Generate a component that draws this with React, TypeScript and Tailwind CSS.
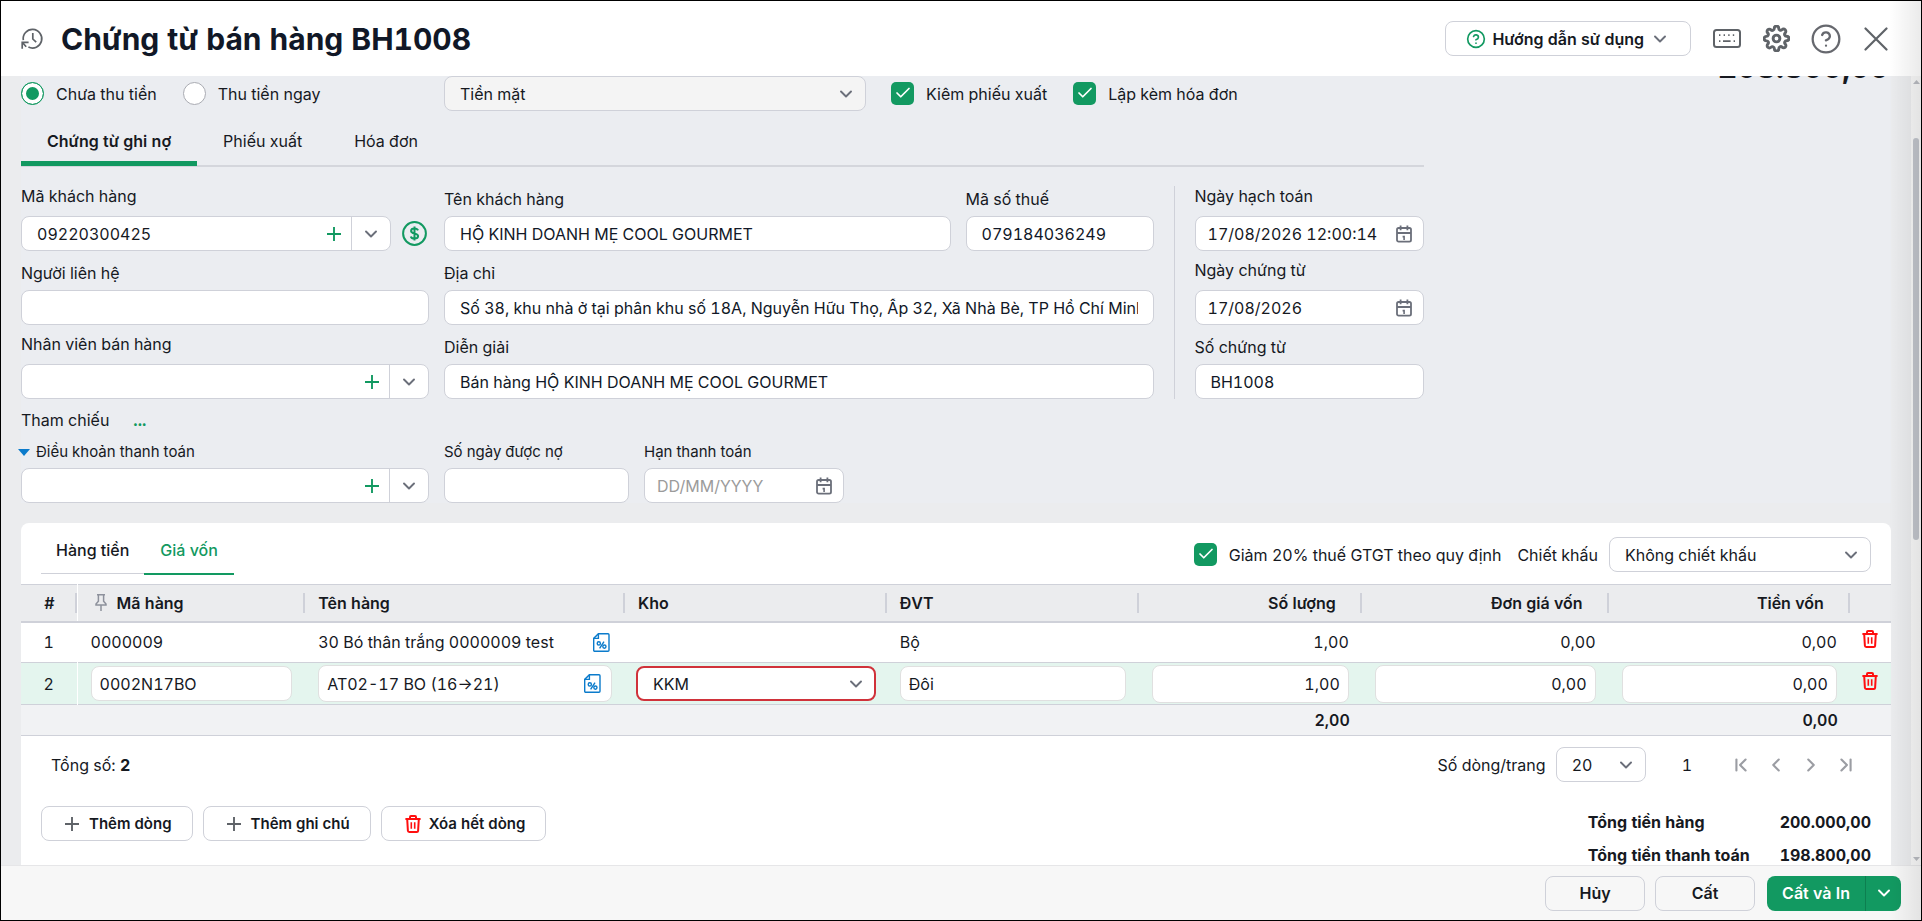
import React from 'react';
import {
  Check,
  ChevronDown,
  ChevronFirst,
  ChevronLast,
  ChevronLeft,
  ChevronRight,
  CircleQuestionMark,
} from 'lucide-react';
import { FiSettings } from 'react-icons/fi';
import clsx from 'clsx';

const FIELD = 'h-[35px] w-full rounded-lg border border-[#cfd1d9] bg-white px-[15px] text-[#111827] outline-none';

const HistoryIcon = () => (
  <svg width="23" height="23" viewBox="0 0 23 23" fill="none" stroke="#5f6368" strokeWidth="1.7">
    <path d="M2.3 13.2A9.3 9.3 0 1 1 7.4 20.1" />
    <path d="M11.8 6v6l3.4 3.2" />
    <path d="M1.2 21.8v-6.4h6.4M1.6 15.8l3.6 4" />
  </svg>
);

const KeyboardIcon = () => (
  <svg width="28" height="20" viewBox="0 0 28 20" fill="none" stroke="#5f6368" strokeWidth="2">
    <rect x="1" y="1" width="26" height="17" rx="2.5" />
    <path d="M6 6.2h1.4M10.6 6.2H12M15.2 6.2h1.4M19.8 6.2h1.4M6 12.2h1.4M10 12.2h7.6M20.6 12.2H22" strokeWidth="1.8" />
  </svg>
);

const CloseIcon = () => (
  <svg width="24" height="24" viewBox="0 0 24 24" fill="none" stroke="#5f6368" strokeWidth="2.2" strokeLinecap="round">
    <path d="M1.5 1.5l21 21M22.5 1.5l-21 21" />
  </svg>
);

const CalendarIcon = () => (
  <svg width="16" height="18" viewBox="0 0 16 18" fill="none" stroke="#6b6f7a" strokeWidth="1.8">
    <rect x="1" y="3" width="14" height="13.6" rx="1.6" />
    <path d="M1 8h14M4.6 .6v4.6M11.4 .6v4.6" />
    <path d="M6.6 11.6h1.5v3.4" strokeWidth="1.6" />
  </svg>
);

const PlusIcon = ({ color }: { color: string }) => (
  <svg width="14" height="14" viewBox="0 0 14 14" fill="none" stroke={color} strokeWidth="1.9">
    <path d="M7 0v14M0 7h14" />
  </svg>
);

const TrashIcon = ({ className }: { className?: string }) => (
  <svg className={className} width="16" height="18" viewBox="0 0 16 18" fill="none" stroke="#ff0f0f" strokeWidth="2">
    <path d="M.4 4h15.2" />
    <path d="M5 4V2a1 1 0 0 1 1-1h4a1 1 0 0 1 1 1v2" />
    <path d="M2.2 4l.7 11.8a1.3 1.3 0 0 0 1.3 1.2h7.6a1.3 1.3 0 0 0 1.3-1.2L13.8 4" />
    <path d="M6.3 7.2v6.6M9.7 7.2v6.6" strokeWidth="1.6" />
  </svg>
);

const TaxFileIcon = () => (
  <svg width="17" height="19" viewBox="0 0 17 19" fill="none" stroke="#0b7bcb" strokeWidth="1.4">
    <path d="M5.4 .7H15a1 1 0 0 1 1 1v15.6a1 1 0 0 1-1 1H1.7a1 1 0 0 1-1-1V5.4z" />
    <path d="M5.4 .7v4.7H.7" />
    <circle cx="5.8" cy="10.4" r="1.6" />
    <circle cx="11.4" cy="13.6" r="1.6" />
    <path d="M11 8.6l-4.4 6.8" />
  </svg>
);

const PinIcon = () => (
  <svg width="12" height="17" viewBox="0 0 12 17" fill="none" stroke="#8d919c" strokeWidth="1.5">
    <path d="M2 .8h8M3.4 .8v6.4L1 10v.9h10V10L8.6 7.2V.8M6 11v6" />
  </svg>
);

const MoneyIcon = () => (
  <svg width="25" height="25" viewBox="0 0 25 25" fill="none" stroke="#129961" strokeWidth="2">
    <circle cx="12.5" cy="12.5" r="11.4" />
    <path d="M16 9.4c-.5-1.3-1.8-1.9-3.5-1.9-2 0-3.4 .9-3.4 2.4 0 3.4 7 1.7 7 5.2 0 1.6-1.5 2.5-3.6 2.5-1.9 0-3.3-.7-3.7-2.2M12.5 5.4v14.2" />
  </svg>
);

const Chevron = () => <ChevronDown size={20} strokeWidth={2.3} className="text-[#6b6f7a]" />;

interface LabelProps {
  htmlFor: string;
  high?: boolean;
  children: React.ReactNode;
}

const FieldLabel: React.FC<LabelProps> = ({ htmlFor, high, children }) => (
  <label htmlFor={htmlFor} className={clsx('flex h-8 leading-6', high ? 'items-start' : 'items-end pb-[5px]')}>
    {children}
  </label>
);

const Combo = ({ id, value = '' }: { id: string; value?: string }) => (
  <div className="flex h-[35px] min-w-0 flex-1 items-stretch overflow-hidden rounded-lg border border-[#cfd1d9] bg-white">
    <input id={id} defaultValue={value} className="min-w-0 flex-1 px-[15px] outline-none" />
    <button aria-label="Thêm" className="flex w-[34px] items-center justify-center">
      <PlusIcon color="#129961" />
    </button>
    <button aria-label="Mở danh sách" className="flex w-[39px] items-center justify-center border-l border-[#cfd1d9]">
      <Chevron />
    </button>
  </div>
);

const Dropdown = ({ id, value, label, className }: { id: string; value: string; label?: string; className?: string }) => (
  <div className="relative w-full">
    <select
      id={id}
      aria-label={label}
      className={clsx('h-[35px] w-full appearance-none rounded-lg border pl-[15px] pr-9 outline-none', className)}
    >
      <option>{value}</option>
    </select>
    <span className="pointer-events-none absolute inset-y-0 right-[10px] flex items-center">
      <Chevron />
    </span>
  </div>
);

const DateField = ({ id, value, placeholder }: { id: string; value?: string; placeholder?: string }) => (
  <div className="flex h-[35px] items-center rounded-lg border border-[#cfd1d9] bg-white pl-3 pr-[11px]">
    <input
      id={id}
      defaultValue={value}
      placeholder={placeholder}
      className="min-w-0 flex-1 outline-none placeholder:text-[#9b9b9b]"
    />
    <button aria-label="Chọn ngày">
      <CalendarIcon />
    </button>
  </div>
);

const CheckField = ({ label }: { label: string }) => (
  <label className="flex items-center gap-3">
    <span className="relative flex size-[23px]">
      <input type="checkbox" defaultChecked className="size-[23px] appearance-none rounded-[5px] bg-[#129961]" />
      <Check size={18} strokeWidth={2.3} className="pointer-events-none absolute left-[3px] top-[2px] text-white" />
    </span>
    {label}
  </label>
);

const RadioField = ({ label, checked }: { label: string; checked?: boolean }) => (
  <label className="flex items-center gap-3">
    <input
      type="radio"
      name="payment"
      defaultChecked={checked}
      className="size-[23px] appearance-none rounded-full border border-[#a9abb2] bg-white checked:border-[#129961] checked:bg-[#129961] checked:shadow-[inset_0_0_0_4px_white]"
    />
    {label}
  </label>
);

const COLUMNS = [
  { label: '#', width: 'w-[3%]', right: false },
  { label: 'Mã hàng', width: 'w-[12.2%]', right: false },
  { label: 'Tên hàng', width: 'w-[17.1%]', right: false },
  { label: 'Kho', width: 'w-[14%]', right: false },
  { label: 'ĐVT', width: 'w-[13.5%]', right: false },
  { label: 'Số lượng', width: 'w-[11.9%]', right: true },
  { label: 'Đơn giá vốn', width: 'w-[13.2%]', right: true },
  { label: 'Tiền vốn', width: 'w-[12.9%]', right: true },
  { label: '', width: 'w-[2.2%]', right: false },
];

const CELL_INPUT = 'w-full rounded-lg border border-[#e0e0e0] bg-white px-2 outline-none';

const Header = () => (
  <header className="flex h-[75px] shrink-0 items-center justify-between bg-white pl-5 pr-[33px]">
    <div className="flex items-center gap-[17px]">
      <HistoryIcon />
      <h1 className="text-[30px] font-bold leading-10 text-[#111827]">Chứng từ bán hàng BH1008</h1>
    </div>
    <div className="flex items-center gap-[22px]">
      <button className="flex h-[35px] items-center rounded-lg border border-[#cfd1d9] px-5 font-semibold">
        <CircleQuestionMark size={20} className="mr-[6px] text-[#129961]" />
        Hướng dẫn sử dụng
        <span className="ml-[6px]">
          <Chevron />
        </span>
      </button>
      <button aria-label="Phím tắt">
        <KeyboardIcon />
      </button>
      <button aria-label="Thiết lập">
        <FiSettings size={27} color="#5f6368" strokeWidth={2.6} />
      </button>
      <button aria-label="Trợ giúp" className="-ml-[2px]">
        <CircleQuestionMark size={32} strokeWidth={1.7} className="text-[#66686e]" />
      </button>
      <button aria-label="Đóng">
        <CloseIcon />
      </button>
    </div>
  </header>
);

const VoucherForm = () => (
  <form className="flex justify-between bg-[#ebedf1]">
    <div className="w-3/4 pt-9">
      <div className="flex items-center">
        <div className="flex w-[408px] items-center gap-[26px]">
          <RadioField label="Chưa thu tiền" checked />
          <RadioField label="Thu tiền ngay" />
        </div>
        <div className="ml-[15px] w-[422px]">
          <Dropdown id="method" label="Phương thức" value="Tiền mặt" className="border-[#cfd1d9] bg-[#f4f4f4]" />
        </div>
        <div className="ml-[25px] flex gap-[26px]">
          <CheckField label="Kiêm phiếu xuất" />
          <CheckField label="Lập kèm hóa đơn" />
        </div>
      </div>

      <div className="mt-[10px] flex border-b-2 border-[#d4d6dc]">
        <button type="button" className="-mb-px h-[45px] border-b-[5px] border-[#129961] px-[26px] font-semibold">
          Chứng từ ghi nợ
        </button>
        <button type="button" className="h-10 px-[26px]">Phiếu xuất</button>
        <button type="button" className="h-10 px-[26px]">Hóa đơn</button>
      </div>

      <div className="flex pt-[17px]">
        <div className="flex w-[408px] shrink-0 flex-col gap-[7px]">
          <div>
            <FieldLabel htmlFor="customer" high>Mã khách hàng</FieldLabel>
            <div className="flex items-center gap-[11px] pr-[2px]">
              <Combo id="customer" value="09220300425" />
              <MoneyIcon />
            </div>
          </div>
          <div>
            <FieldLabel htmlFor="contact">Người liên hệ</FieldLabel>
            <input id="contact" className={FIELD} />
          </div>
          <div>
            <FieldLabel htmlFor="seller" high>Nhân viên bán hàng</FieldLabel>
            <div className="flex">
              <Combo id="seller" />
            </div>
          </div>
        </div>

        <div className="ml-[15px] flex flex-1 flex-col gap-[7px]">
          <div className="flex gap-[15px]">
            <div className="flex-1">
              <FieldLabel htmlFor="name">Tên khách hàng</FieldLabel>
              <input id="name" className={FIELD} defaultValue="HỘ KINH DOANH MẸ COOL GOURMET" />
            </div>
            <div className="w-[188px]">
              <FieldLabel htmlFor="tax">Mã số thuế</FieldLabel>
              <input id="tax" className={FIELD} defaultValue="079184036249" />
            </div>
          </div>
          <div>
            <FieldLabel htmlFor="address">Địa chỉ</FieldLabel>
            <input
              id="address"
              className={FIELD}
              defaultValue="Số 38, khu nhà ở tại phân khu số 18A, Nguyễn Hữu Thọ, Ấp 32, Xã Nhà Bè, TP Hồ Chí Minh"
            />
          </div>
          <div>
            <FieldLabel htmlFor="memo">Diễn giải</FieldLabel>
            <input id="memo" className={FIELD} defaultValue="Bán hàng HỘ KINH DOANH MẸ COOL GOURMET" />
          </div>
        </div>

        <div className="mx-5 mt-[2px] w-px bg-[#cfd1d9]" />

        <div className="flex w-[229px] flex-col gap-[7px]">
          <div>
            <FieldLabel htmlFor="posted" high>Ngày hạch toán</FieldLabel>
            <DateField id="posted" value="17/08/2026 12:00:14" />
          </div>
          <div>
            <FieldLabel htmlFor="issued" high>Ngày chứng từ</FieldLabel>
            <DateField id="issued" value="17/08/2026" />
          </div>
          <div>
            <FieldLabel htmlFor="number">Số chứng từ</FieldLabel>
            <input id="number" className={FIELD} defaultValue="BH1008" />
          </div>
        </div>
      </div>

      <div className="mt-[9px] flex items-center gap-6 leading-6">
        <span>Tham chiếu</span>
        <a href="#reference" className="font-bold text-[#129961]">...</a>
      </div>

      <div className="mt-2 flex">
        <div className="w-[408px]">
          <label htmlFor="terms" className="mb-1 flex items-center gap-[6px] text-[15px] leading-6">
            <svg width="12" height="7" viewBox="0 0 12 7" className="-ml-[3px]">
              <path d="M0 0h12L6 7z" fill="#0b7bcb" />
            </svg>
            Điều khoản thanh toán
          </label>
          <div className="flex">
            <Combo id="terms" />
          </div>
        </div>
        <div className="ml-[15px] w-[185px]">
          <label htmlFor="days" className="mb-1 block text-[15px] leading-6">Số ngày được nợ</label>
          <input id="days" className={FIELD} />
        </div>
        <div className="ml-[15px] w-[200px]">
          <label htmlFor="due" className="mb-1 block text-[15px] leading-6">Hạn thanh toán</label>
          <DateField id="due" placeholder="DD/MM/YYYY" />
        </div>
      </div>
    </div>
    <div className="pr-[2px] text-[30px] font-bold leading-[54px]">208.800,00</div>
  </form>
);

const ItemTable = () => (
  <table className="w-full table-fixed border-collapse">
    <thead>
      <tr className="h-[37px] border-t border-b-2 border-t-[#cfd1d9] border-b-[#cfd1d9] bg-[#ebecee]">
        {COLUMNS.map((c, i) => (
          <th key={i} className={clsx('p-0 font-semibold', c.width, i === 0 && 'border-r border-white')}>
            <div
              className={clsx(
                'flex h-5 items-center gap-[10px] leading-5',
                i === 0 ? 'justify-center pl-[3px]' : 'pl-[13px]',
                c.right && 'justify-end pr-6',
                i < 8 && 'border-r-2 border-[#cfd1d9]'
              )}
            >
              {i === 1 && <span className="ml-1"><PinIcon /></span>}
              {c.label}
            </div>
          </th>
        ))}
      </tr>
    </thead>
    <tbody>
      <tr className="h-[41px] border-b border-[#cfd1d9]">
        <td className="border-r border-white text-center">1</td>
        <td className="px-[13px]">0000009</td>
        <td className="px-[13px]">
          <div className="flex items-center justify-between pr-[2px]">
            30 Bó thân trắng 0000009 test
            <TaxFileIcon />
          </div>
        </td>
        <td />
        <td className="px-[13px]">Bộ</td>
        <td className="px-[13px] text-right">1,00</td>
        <td className="px-[13px] text-right">0,00</td>
        <td className="px-[13px] text-right">0,00</td>
        <td className="text-center">
          <button aria-label="Xóa dòng 1"><TrashIcon /></button>
        </td>
      </tr>
      <tr className="h-[42px] border-b border-[#cfd1d9] bg-[#e4f5ee]">
        <td className="border-r border-white text-center">2</td>
        <td className="px-[13px]">
          <input aria-label="Mã hàng" className={clsx(CELL_INPUT, 'h-[35px]')} defaultValue="0002N17BO" />
        </td>
        <td className="px-[13px]">
          <div className="flex h-[37px] items-center rounded-lg border border-[#e0e0e0] bg-white pl-2 pr-[10px]">
            <input aria-label="Tên hàng" className="min-w-0 flex-1 outline-none" defaultValue="AT02-17 BO (16→21)" />
            <TaxFileIcon />
          </div>
        </td>
        <td className="px-[11px]">
          <Dropdown id="warehouse" label="Kho" value="KKM" className="border-2 border-[#d0323a] bg-white" />
        </td>
        <td className="px-[13px]">
          <input aria-label="Đơn vị tính" className={clsx(CELL_INPUT, 'h-[35px]')} defaultValue="Đôi" />
        </td>
        <td className="px-[13px]">
          <input aria-label="Số lượng" className={clsx(CELL_INPUT, 'h-[38px] text-right')} defaultValue="1,00" />
        </td>
        <td className="px-[13px]">
          <input aria-label="Đơn giá vốn" className={clsx(CELL_INPUT, 'h-[38px] text-right')} defaultValue="0,00" />
        </td>
        <td className="px-[13px]">
          <input aria-label="Tiền vốn" className={clsx(CELL_INPUT, 'h-[38px] text-right')} defaultValue="0,00" />
        </td>
        <td className="text-center">
          <button aria-label="Xóa dòng 2"><TrashIcon /></button>
        </td>
      </tr>
    </tbody>
    <tfoot>
      <tr className="h-[31px] border-b border-[#cfd1d9] bg-[#f1f2f4] text-right font-semibold">
        <td colSpan={5} />
        <td className="px-3">2,00</td>
        <td />
        <td className="px-3">0,00</td>
        <td />
      </tr>
    </tfoot>
  </table>
);

const OUTLINE = 'flex h-[35px] items-center justify-center rounded-lg border border-[#cfd1d9] font-semibold';

const ItemsPanel = () => (
  <section className="mt-5 flex-1 rounded-t-lg bg-white">
    <div className="flex h-[61px] items-start justify-between px-5">
      <div className="mt-2 flex border-b border-[#cfd1d9] font-medium">
        <button className="h-[42px] px-[15px] pb-1">Hàng tiền</button>
        <button className="-mb-[2px] h-[44px] border-b-2 border-[#129961] px-4 pb-1 text-[#129961]">Giá vốn</button>
      </div>
      <div className="mt-[14px] flex items-center">
        <CheckField label="Giảm 20% thuế GTGT theo quy định" />
        <label htmlFor="discount" className="ml-4 mr-[11px]">Chiết khấu</label>
        <div className="w-[262px]">
          <Dropdown id="discount" value="Không chiết khấu" className="border-[#cfd1d9] bg-white" />
        </div>
      </div>
    </div>
    <ItemTable />
    <div className="mt-[11px] flex h-[35px] items-center justify-between pl-[30px] pr-[34px]">
      <p>Tổng số: <b className="font-bold">2</b></p>
      <div className="flex items-center">
        <label htmlFor="pagesize">Số dòng/trang</label>
        <div className="ml-[10px] w-[90px]">
          <Dropdown id="pagesize" value="20" className="border-[#cfd1d9] bg-white" />
        </div>
        <span className="ml-9 mr-[38px]">1</span>
        <div className="flex gap-[13px] text-[#9b9da3]">
          <button aria-label="Trang đầu"><ChevronFirst size={22} strokeWidth={2.3} /></button>
          <button aria-label="Trang trước"><ChevronLeft size={22} strokeWidth={2.3} /></button>
          <button aria-label="Trang sau"><ChevronRight size={22} strokeWidth={2.3} /></button>
          <button aria-label="Trang cuối"><ChevronLast size={22} strokeWidth={2.3} /></button>
        </div>
      </div>
    </div>
    <div className="mt-6 flex items-start justify-between px-5">
      <div className="flex gap-[10px] text-[15px]">
        <button className={clsx(OUTLINE, 'gap-[10px] px-5')}>
          <span className="ml-[3px]"><PlusIcon color="#5f6368" /></span>
          Thêm dòng
        </button>
        <button className={clsx(OUTLINE, 'gap-[10px] px-5')}>
          <span className="ml-[3px]"><PlusIcon color="#5f6368" /></span>
          Thêm ghi chú
        </button>
        <button className={clsx(OUTLINE, 'gap-2 px-5')}>
          <span className="ml-[3px]"><TrashIcon /></span>
          Xóa hết dòng
        </button>
      </div>
      <dl className="grid grid-cols-[auto_auto] gap-x-[30px] font-bold leading-[33px]">
        <dt>Tổng tiền hàng</dt>
        <dd className="text-right">200.000,00</dd>
        <dt>Tổng tiền thanh toán</dt>
        <dd className="text-right">198.800,00</dd>
      </dl>
    </div>
  </section>
);

const Scrollbar = () => (
  <div className="flex w-[10px] shrink-0 flex-col items-center justify-between bg-[#f7f7f7] py-1">
    <svg width="7" height="4" viewBox="0 0 7 4"><path d="M3.5 0L7 4H0z" fill="#b9bbc1" /></svg>
    <div className="flex w-full flex-1 flex-col items-center">
      <div className="h-[7%]" />
      <div className="h-[52%] w-[6px] rounded-full bg-[#c1c4cb]" />
    </div>
    <svg width="7" height="4" viewBox="0 0 7 4"><path d="M0 0h7L3.5 4z" fill="#b9bbc1" /></svg>
  </div>
);

const App: React.FC = () => {
  return (
    <div className="relative flex h-screen flex-col border border-black bg-[#ebecee] font-['Inter','Liberation_Sans',sans-serif] text-[16px] leading-6 text-[#16191f] tabular-nums [font-optical-sizing:none]">
      <Header />
      <div className="flex min-h-0 flex-1">
        <main className="min-w-0 flex-1 overflow-hidden">
          {/* the form is scrolled down a little, so its first line sits under the header */}
          <div className="-mt-9 flex min-h-full flex-col pl-5 pr-5">
            <VoucherForm />
            <ItemsPanel />
          </div>
        </main>
        <Scrollbar />
      </div>
      <footer className="flex h-[55px] shrink-0 items-center justify-end border-t border-[#e6e6e8] bg-[#f7f7f7] pr-5">
        <button className={clsx(OUTLINE, 'w-[100px]')}>Hủy</button>
        <button className={clsx(OUTLINE, 'ml-[10px] w-[100px]')}>Cất</button>
        <div className="ml-3 flex h-[35px] overflow-hidden rounded-lg bg-[#129961] font-semibold text-white">
          <button className="px-[15px]">Cất và In</button>
          <button aria-label="Tùy chọn in" className="flex w-9 items-center justify-center border-l border-[#0d7f50]">
            <ChevronDown size={20} strokeWidth={2.3} />
          </button>
        </div>
      </footer>
      <div className="pointer-events-none absolute inset-y-0 right-0 w-8 bg-linear-to-r from-transparent to-black/8" />
    </div>
  );
};

export default App;
